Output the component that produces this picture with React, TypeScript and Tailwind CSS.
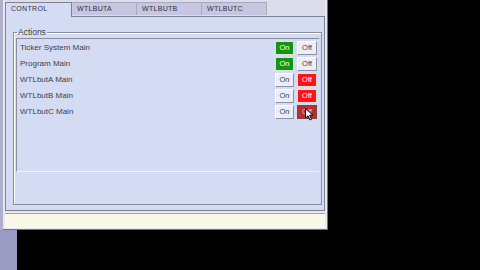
import React from 'react';

const rows = [
  { name: 'Ticker System Main', on: true },
  { name: 'Program Main', on: true },
  { name: 'WTLbutA Main', on: false },
  { name: 'WTLbutB Main', on: false },
  { name: 'WTLbutC Main', on: false, pressed: true },
];

const tabs = ['CONTROL', 'WTLBUTA', 'WTLBUTB', 'WTLBUTC'];

function Cursor() {
  return (
    <svg className="absolute left-[7px] top-[2px]" width="9" height="13" viewBox="0 0 9 13">
      <path d="M0.5 0.5 L0.5 10 L3 7.8 L5 12 L6.6 11.2 L4.7 7.2 L8 7.2 Z" fill="#fff" stroke="#000" strokeWidth="1" />
    </svg>
  );
}

export default function App() {
  return (
    <div className="w-[480px] h-[270px] bg-black overflow-hidden font-['Liberation_Sans',sans-serif]">
      <div className="flex h-[230px]">
        <div className="w-[3px] bg-[#b0b0cc]" />
        <div className="w-[325px] flex flex-col bg-[#e6e8f4] border-r border-b border-[#707080] pl-[2px] pr-[2px]">
          {/* tabs */}
          <div className="flex h-[16px] pt-[2px] bg-[#dcdcea]">
            {tabs.map((t, i) => (
              <div
                key={t}
                className={
                  i === 0
                    ? 'w-[67px] h-[15px] bg-[#d4dcf4] border-l border-t border-r border-[#808090] text-[7px] text-[#303040] pl-[5px] leading-[12px] tracking-[0.3px] z-10'
                    : 'w-[65px] h-[13px] bg-[#c6c6e0] border-t border-r border-[#a8a8c0] text-[7px] text-[#303040] pl-[5px] leading-[12px] tracking-[0.3px]'
                }
              >
                {t}
              </div>
            ))}
          </div>
          {/* panel */}
          <div className="h-[195px] bg-[#d4dcf4] border border-[#808090] pt-[10px] pl-[7px] pr-[2px]">
            <fieldset className="h-[178px] border border-[#8c8ca0] shadow-[inset_1px_1px_0_#ffffff] px-[2px] pb-[2px]">
              <legend className="text-[8.5px] text-[#383838] px-[1px] leading-[10px] ml-[1px]">Actions</legend>
              <div className="mt-[1px] h-[134px] border-l border-t border-[#8c8ca0] border-b border-b-[#f0f4ff] pt-[1px]">
                {rows.map((r) => (
                  <div key={r.name} className="flex items-center h-[16px] pl-[3px] pr-[2px]">
                    <span className="flex-1 text-[8px] text-[#404048]">{r.name}</span>
                    <div
                      className={
                        r.on
                          ? 'w-[19px] h-[14px] bg-[#129612] text-white text-[7.5px] flex items-center justify-center border border-[#e0e0e0]'
                          : 'w-[19px] h-[14px] bg-[#eceef6] text-[#404050] text-[7.5px] flex items-center justify-center border border-[#9090a0] border-t-white border-l-white'
                      }
                    >
                      On
                    </div>
                    <div className="w-[3px]" />
                    <div
                      className={
                        r.pressed
                          ? 'relative w-[20px] h-[14px] bg-[#b83030] text-[#f0c0c0] text-[7.5px] flex items-center justify-center border border-[#804040]'
                          : r.on
                          ? 'w-[20px] h-[14px] bg-[#eceef6] text-[#404050] text-[7.5px] flex items-center justify-center border border-[#9090a0] border-t-white border-l-white'
                          : 'w-[20px] h-[14px] bg-[#ff1414] text-white text-[7.5px] flex items-center justify-center border border-[#e0e0e0]'
                      }
                    >
                      Off
                      {r.pressed && <Cursor />}
                    </div>
                  </div>
                ))}
              </div>
            </fieldset>
          </div>
          {/* status bar */}
          <div className="mt-[2px] h-[15px] bg-[#fcf8e8] border-t border-[#a0a0a8]" />
        </div>
      </div>
      <div className="w-[17px] h-[40px] bg-[#9a9ac2]" />
    </div>
  );
}
